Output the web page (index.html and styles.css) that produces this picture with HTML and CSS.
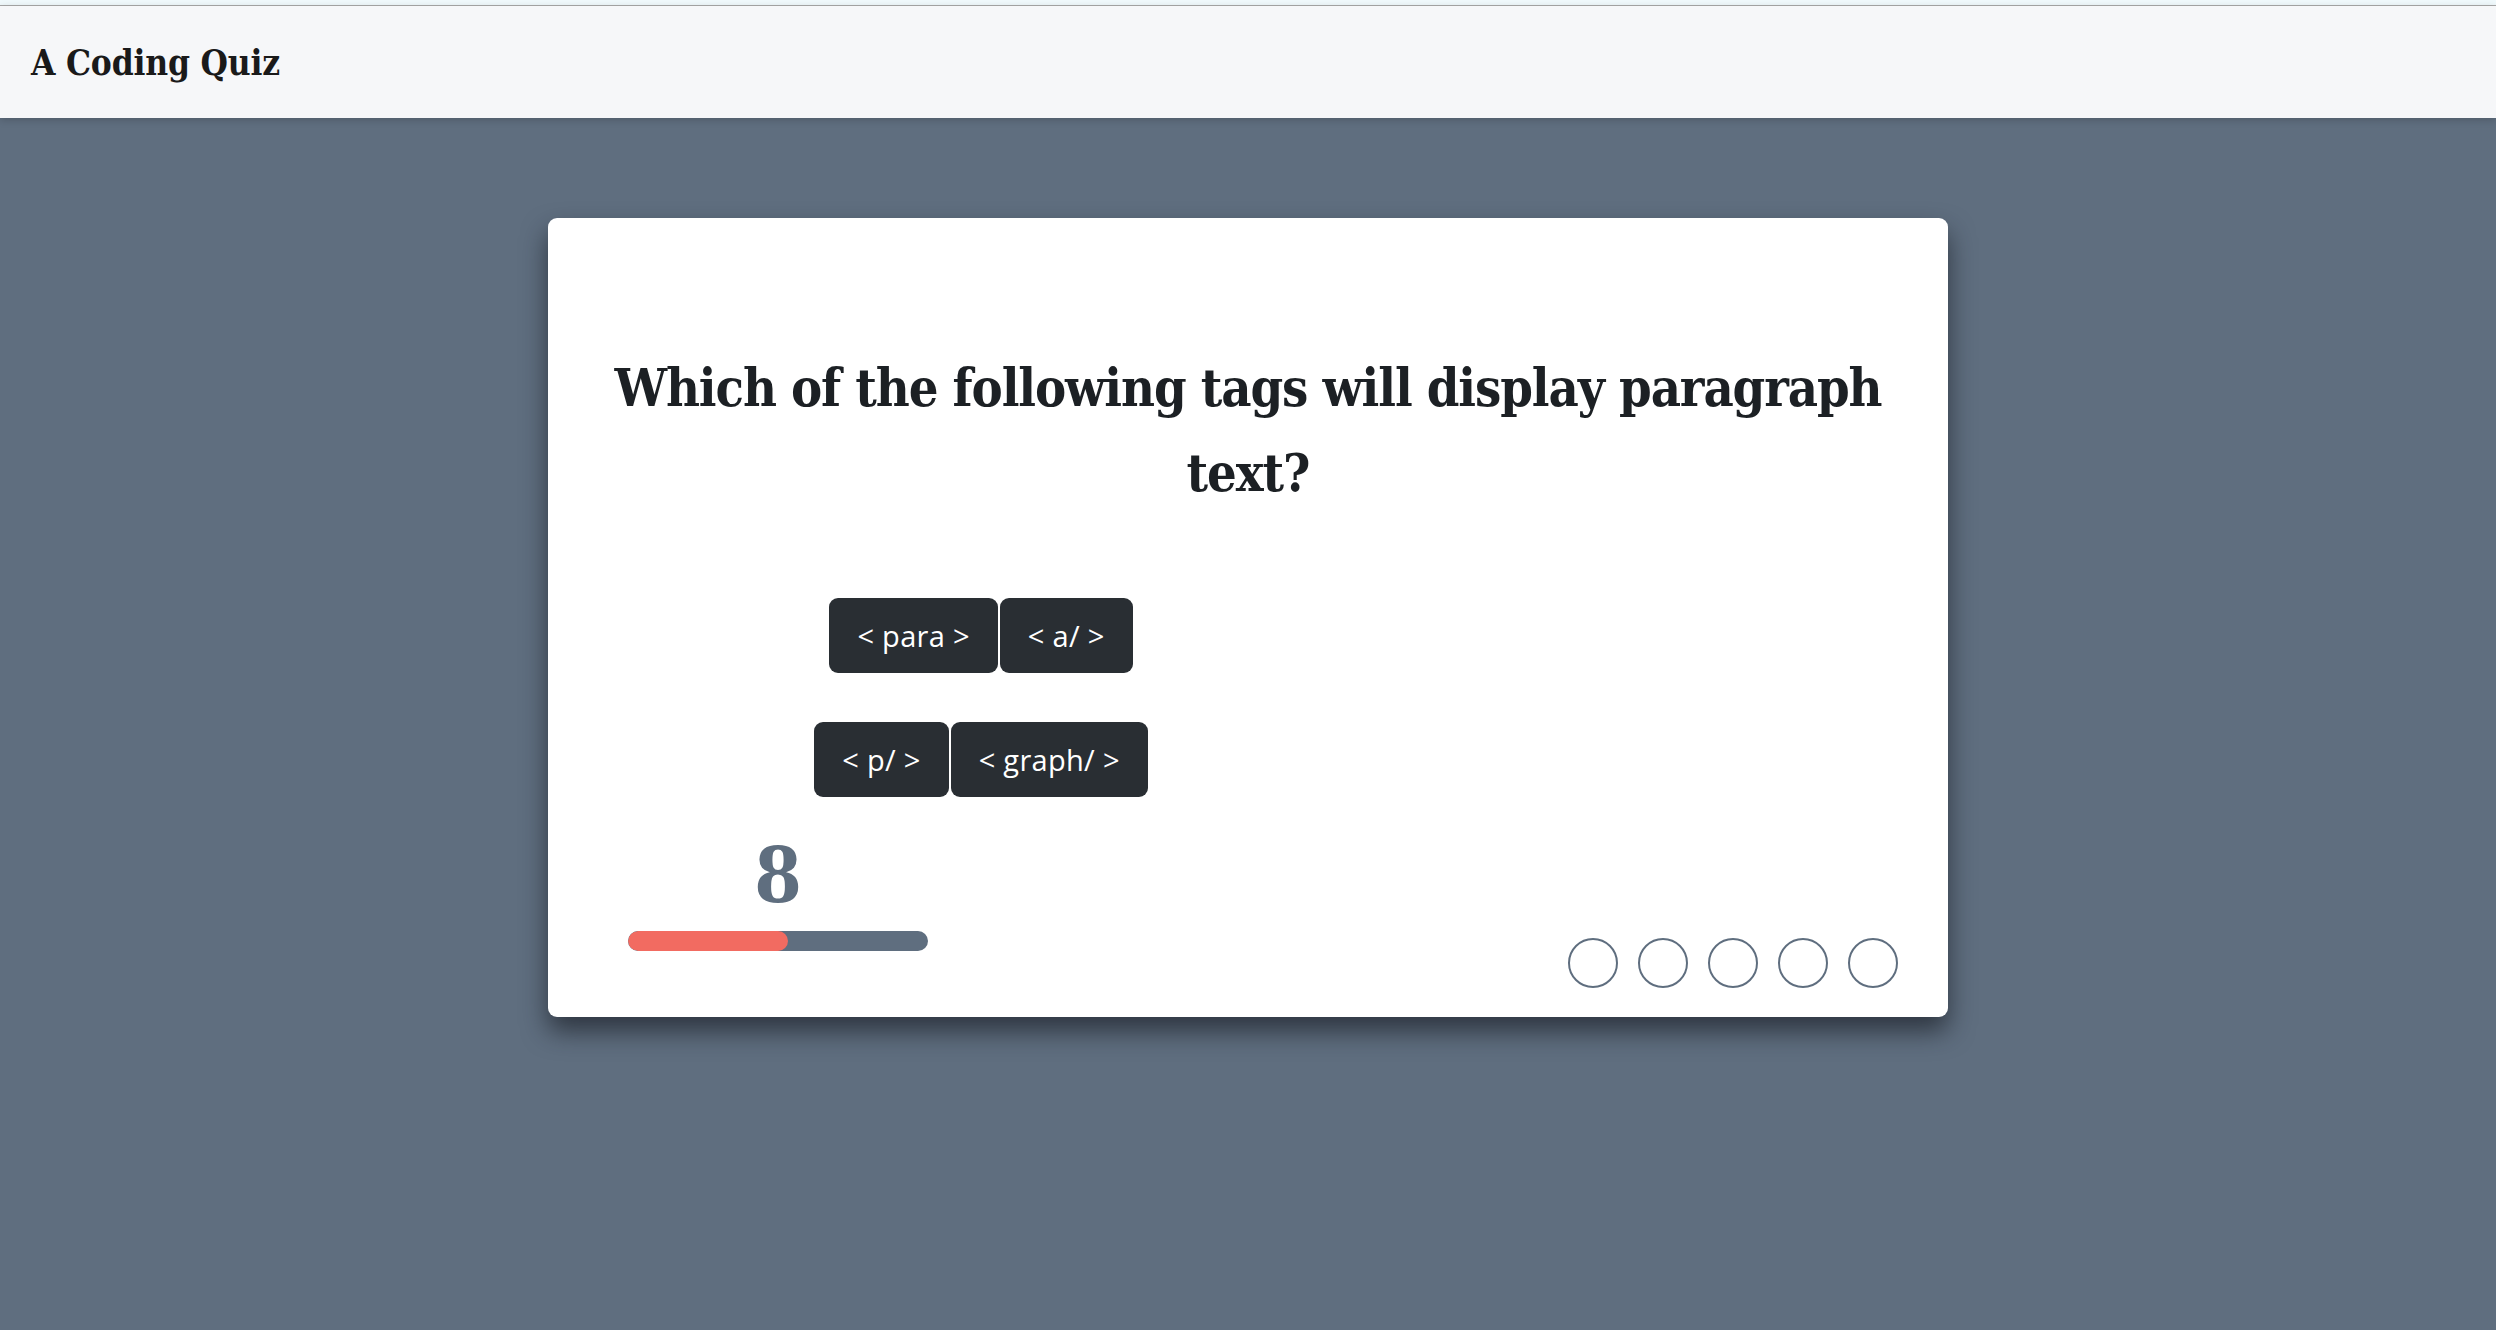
FILE: index.html
```html
<!DOCTYPE html>
<html lang="en">
<head>
<meta charset="utf-8">
<title>A Coding Quiz</title>
<link rel="stylesheet" href="styles.css">
</head>
<body>
<div class="topstrip"></div>
<header class="navbar">
  <span class="brand">A Coding Quiz</span>
</header>
<main class="stage">
  <section class="card">
    <h2 class="question">Which of the following tags will display paragraph text?</h2>
    <div class="card-body">
      <div class="left-col">
        <div class="answers">
          <div class="answer-row">
            <button class="answer">&lt; para &gt;</button>
            <button class="answer">&lt; a/ &gt;</button>
          </div>
          <div class="answer-row">
            <button class="answer">&lt; p/ &gt;</button>
            <button class="answer">&lt; graph/ &gt;</button>
          </div>
        </div>
        <div class="timer">
          <div class="timer-count">8</div>
          <div class="progress"><div class="progress-fill" style="width:53.3%"></div></div>
        </div>
      </div>
      <div class="score">
        <span class="dot"></span>
        <span class="dot"></span>
        <span class="dot"></span>
        <span class="dot"></span>
        <span class="dot"></span>
      </div>
    </div>
  </section>
</main>
</body>
</html>
```
FILE: styles.css
```css
* { box-sizing: border-box; }
html, body { margin: 0; padding: 0; }
body {
  background: #5f6e7f;
  font-family: "DejaVu Serif Condensed", "DejaVu Serif", serif;
  color: #212529;
}
.topstrip {
  height: 6px;
  background: #f0f9fc;
  border-bottom: 1px solid #a9a9a9;
}
.navbar {
  height: 112px;
  background: #f6f7f9;
  display: flex;
  align-items: center;
  padding-left: 31px;
  position: relative;
  z-index: 1;
  box-shadow: 0 2px 8px rgba(0, 0, 0, 0.18);
}
.brand {
  font-family: "DejaVu Serif Condensed", "DejaVu Serif", serif;
  font-weight: 700;
  font-size: 35px;
  color: #1a1a1a;
  letter-spacing: -0.2px;
}
.stage {
  min-height: 1212px;
  display: flex;
  justify-content: center;
  align-items: flex-start;
  padding-top: 100px;
}
.card {
  width: 1400px;
  height: 799px;
  background: #ffffff;
  border-radius: 9px;
  box-shadow: 0 14px 26px rgba(25, 30, 38, 0.7);
  padding: 127px 50px 29px 80px;
  display: flex;
  flex-direction: column;
}
.question {
  margin: 0 0 0 -30px;
  font-family: "DejaVu Serif Condensed", "DejaVu Serif", serif;
  font-weight: 700;
  font-size: 52px;
  line-height: 85px;
  letter-spacing: -1.1px;
  text-align: center;
  color: #1c2024;
}
.card-body {
  flex: 1;
  display: flex;
  justify-content: space-between;
  align-items: flex-end;
}
.left-col {
  width: 706px;
  display: flex;
  flex-direction: column;
  align-items: flex-start;
  align-self: stretch;
  padding-top: 83px;
}
.answers {
  width: 100%;
  display: flex;
  flex-direction: column;
  gap: 49px;
}
.answer-row {
  display: flex;
  justify-content: center;
  gap: 2px;
}
.answer {
  height: 75px;
  padding: 0 28px;
  background: #292e33;
  color: #ffffff;
  border: none;
  border-radius: 9px;
  font-family: "Open Sans", Lato, sans-serif;
  font-size: 29px;
  font-weight: 400;
  letter-spacing: 0.3px;
  cursor: pointer;
}
.timer {
  width: 300px;
  margin-top: 41px;
  display: flex;
  flex-direction: column;
  align-items: center;
}
.timer-count {
  font-family: "DejaVu Serif Condensed", "DejaVu Serif", serif;
  font-weight: 700;
  font-size: 76px;
  line-height: 76px;
  color: #5f6e7f;
}
.progress {
  margin-top: 17px;
  width: 300px;
  height: 20px;
  border-radius: 10px;
  background: #5f6e7f;
  overflow: hidden;
}
.progress-fill {
  height: 100%;
  background: #f26b61;
  border-radius: 10px;
}
.score {
  display: flex;
  gap: 20px;
}
.dot {
  width: 50px;
  height: 50px;
  border: 2px solid #5f6e7f;
  border-radius: 50%;
  background: #ffffff;
}
```
